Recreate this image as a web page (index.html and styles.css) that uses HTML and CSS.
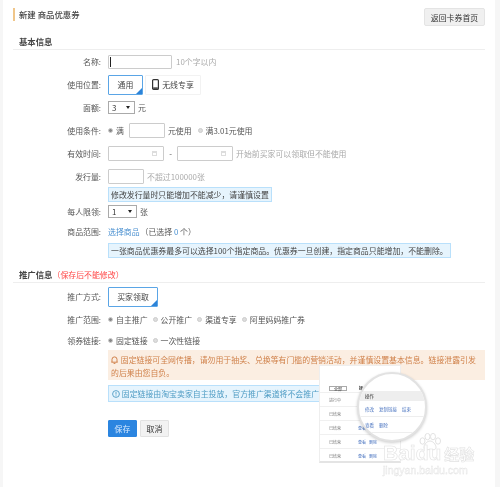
FILE: index.html
```html
<!DOCTYPE html>
<html lang="zh-CN">
<head>
    <meta charset="UTF-8">
    <title>新建商品优惠券</title>
    <link rel="stylesheet" href="styles.css">
</head>
<body>
<div class="page">
    <div class="title-bar">
        <h1 class="page-title">新建 商品优惠券</h1>
        <button class="back-btn">返回卡券首页</button>
    </div>

    <h2 class="section first">基本信息</h2>

    <div class="row">
        <label class="label">名称:</label>
        <span class="input name-input"><i class="caret"></i></span>
        <span class="muted">10个字以内</span>
    </div>
    <div class="row">
        <label class="label">使用位置:</label>
        <span class="tab active tab-common">通用</span>
        <span class="tab tab-wireless">
            <svg class="phone" width="7" height="11" viewBox="0 0 7 11"><rect x="0.6" y="0.6" width="5.8" height="9.8" rx="1" fill="none" stroke="#333" stroke-width="1.2"/><rect x="1.2" y="8.4" width="4.6" height="1.4" fill="#333"/></svg>
            无线专享
        </span>
    </div>
    <div class="row">
        <label class="label">面额:</label>
        <span class="select face-select">3<i class="arrow"></i></span>
        <span>元</span>
    </div>
    <div class="row">
        <label class="label">使用条件:</label>
        <span class="radio on"></span><span class="opt-man">满</span>
        <span class="input cond-input"></span>
        <span class="cond-unit">元使用</span>
        <span class="radio"></span><span>满3.01元使用</span>
    </div>
    <div class="row">
        <label class="label">有效时间:</label>
        <span class="input date"><i class="cal"></i></span>
        <span class="dash">-</span>
        <span class="input date"><i class="cal"></i></span>
        <span class="muted">开始前买家可以领取但不能使用</span>
    </div>
    <div class="row">
        <label class="label">发行量:</label>
        <span class="input count-input"></span>
        <span class="muted">不超过100000张</span>
    </div>
    <p class="hint hint-count">修改发行量时只能增加不能减少&#65292;请谨慎设置</p>
    <div class="row limit-row">
        <label class="label">每人限领:</label>
        <span class="select limit-select">1<i class="arrow"></i></span>
        <span>张</span>
    </div>
    <div class="row goods-row">
        <label class="label">商品范围:</label>
        <a class="link">选择商品</a>
        <span class="picked">&#65288;已选择 <b class="num">0</b> 个&#65289;</span>
    </div>
    <p class="hint hint-goods">一张商品优惠券最多可以选择100个指定商品。优惠券一旦创建&#65292;指定商品只能增加&#65292;不能删除。</p>

    <h2 class="section second">推广信息<span class="warn-note">&#65288;保存后不能修改&#65289;</span></h2>

    <div class="row">
        <label class="label">推广方式:</label>
        <span class="tab active tab-buyer">买家领取</span>
    </div>
    <div class="row">
        <label class="label">推广范围:</label>
        <span class="radio on"></span><span class="opt">自主推广</span>
        <span class="radio"></span><span class="opt">公开推广</span>
        <span class="radio"></span><span class="opt">渠道专享</span>
        <span class="radio"></span><span class="opt">阿里妈妈推广券</span>
    </div>
    <div class="row link-row">
        <label class="label">领券链接:</label>
        <span class="radio on"></span><span class="opt">固定链接</span>
        <span class="radio"></span><span class="opt">一次性链接</span>
    </div>

    <div class="notice">
        <svg class="bell" width="7" height="8" viewBox="0 0 7 8"><path d="M1 6V3.4a2.5 2.5 0 0 1 5 0V6M0.3 6.2h6.4M2.6 7.4h1.8" fill="none" stroke="#d0814a" stroke-width="1"/></svg>
        固定链接可全网传播&#65292;请勿用于抽奖、兑换等有门槛的营销活动&#65292;并谨慎设置基本信息。链接泄露引发的后果由您自负。
    </div>
    <div class="info">
        <svg class="info-icon" width="8" height="8" viewBox="0 0 8 8"><circle cx="4" cy="4" r="3.4" fill="none" stroke="#4f9cc4" stroke-width="0.9"/><path d="M4 2v2.6M4 5.4v0.8" stroke="#4f9cc4" stroke-width="0.9"/></svg>
        固定链接由淘宝卖家自主投放&#65292;官方推广渠道将不会推广
    </div>

    <div class="actions">
        <button class="btn primary">保存</button>
        <button class="btn">取消</button>
    </div>
</div>

<!-- callout picture pasted over the page -->
<div class="callout">
    <div class="callout-top"></div>
    <div class="callout-filter"><span class="mini-select">全部</span><b>操</b></div>
    <div class="callout-row"><span>进行中</span></div>
    <div class="callout-row"><span>已结束</span></div>
    <div class="callout-row"><span>已结束</span><a>查看</a></div>
    <div class="callout-row"><span>已结束</span><a>查看</a><a>删除</a></div>
    <div class="callout-row"><span>已结束</span><a>查看</a><a>删除</a></div>
</div>
<div class="lens">
    <div class="lens-head">操作</div>
    <div class="lens-row"><a>修改</a><a>复制链接</a><a>结束</a></div>
    <div class="lens-row"><a>查看</a><a>删除</a></div>
</div>

<div class="watermark">
    <svg class="paw" width="22" height="18" viewBox="0 0 22 18"><g fill="#fff" stroke="#e2e2e2" stroke-width="1"><ellipse cx="3.5" cy="8" rx="2.5" ry="3.2"/><ellipse cx="8.5" cy="3.6" rx="2.5" ry="3.2"/><ellipse cx="14" cy="3.6" rx="2.5" ry="3.2"/><ellipse cx="19" cy="8" rx="2.5" ry="3.2"/><path d="M11 8c-3 0-6 3.5-6 6.5 0 2.5 3 2.5 6 1.8 3 .7 6 .7 6-1.800C17 11.500 14 8 11 8z"/></g></svg>
    <div class="wm-logo">Baidu<span class="wm-cn">经验</span></div>
    <div class="wm-url">jingyan.baidu.com</div>
</div>
</body>
</html>
```
FILE: styles.css
```css
* {
    box-sizing: border-box;
}
html, body {
    margin: 0;
    padding: 0;
}
body {
    position: relative;
    height: 487px;
    overflow: hidden;
    background-color: #f6f6f6;
    font-family: "Noto Sans CJK SC", "Liberation Sans", sans-serif;
    font-size: 7.9px;
    color: #555;
    filter: blur(0.3px);
}
.page {
    margin: 0 5px 0 3px;
    height: 487px;
    padding: 8px 10px 0;
    background-color: #fff;
}

/* title */
.title-bar {
    display: flex;
    justify-content: space-between;
    align-items: flex-start;
    height: 27px;
}
.page-title {
    margin: 0;
    height: 13px;
    line-height: 13px;
    padding-left: 4px;
    border-left: 2px solid #f0c68a;
    font-size: 8.4px;
    font-weight: 500;
    color: #444;
}
.back-btn {
    width: 61px;
    height: 18px;
    padding: 0;
    border: 1px solid #e4e4e4;
    border-radius: 2px;
    background-color: #f0f0f0;
    font: inherit;
    color: #333;
}

/* sections */
.section {
    margin: 0;
    height: 15px;
    padding-left: 6px;
    border-bottom: 1px solid #eee;
    font-size: 8.4px;
    line-height: 12px;
    font-weight: 700;
    color: #444;
}
.section.second {
    margin-top: 10px;
    margin-bottom: 2px;
}
.warn-note {
    font-size: 7.9px;
    font-weight: 400;
    color: #f44;
}

/* form rows */
.row {
    display: flex;
    align-items: center;
    height: 23px;
    white-space: nowrap;
}
.label {
    flex: none;
    width: 95px;
    padding-right: 7px;
    text-align: right;
}
.limit-row {
    height: 18px;
}
.goods-row {
    height: 22px;
}
.link-row {
    height: 19px;
}
.muted {
    margin-left: 3px;
    color: #aaa;
}

.input {
    position: relative;
    display: inline-block;
    height: 15px;
    border: 1px solid #ccc;
    border-radius: 1px;
    background-color: #fff;
}
.name-input {
    width: 64px;
    height: 14px;
    margin-right: 1px;
}
.caret {
    display: block;
    width: 1px;
    height: 10px;
    margin: 1px 0 0 1px;
    background-color: #222;
}
.cond-input {
    width: 36px;
    margin: 0 3px 0 5px;
}
.date {
    width: 56px;
}
.cal {
    position: absolute;
    right: 6px;
    top: 4px;
    width: 5px;
    height: 5px;
    border: 1px solid #ddd;
    border-top-width: 2px;
}
.dash {
    width: 13px;
    text-align: center;
}
.count-input {
    width: 36px;
}

.tab {
    display: flex;
    align-items: center;
    justify-content: center;
    height: 20px;
    border-radius: 1px;
    color: #444;
}
.tab.active {
    position: relative;
    border: 1px solid #5aa5e6;
}
/* corner mark on the selected tab */
.tab.active::after {
    content: "";
    position: absolute;
    right: 0;
    bottom: 0;
    border: 3px solid transparent;
    border-right-color: #2d83d8;
    border-bottom-color: #2d83d8;
}
.tab-common {
    width: 35px;
}
.tab-buyer {
    width: 50px;
}
.tab-wireless {
    width: 56px;
    margin-left: 2px;
    border: 1px solid #f2f2f2;
    gap: 3px;
}

.select {
    position: relative;
    display: inline-block;
    height: 13px;
    line-height: 11px;
    padding-left: 3px;
    margin-right: 3px;
    border: 1px solid #aaa;
    color: #333;
}
.face-select {
    width: 27px;
}
.limit-select {
    width: 29px;
}
.arrow {
    position: absolute;
    right: 4px;
    top: 4px;
    border: 2px solid transparent;
    border-top: 3px solid #222;
}

.radio {
    flex: none;
    width: 5px;
    height: 5px;
    margin-right: 3px;
    border-radius: 50%;
    background-color: #ddd;
    border: 1px solid #ccc;
}
.radio.on {
    background-color: #888;
}
.cond-unit {
    margin-right: 6px;
}
.opt {
    margin-right: 5px;
}
.link {
    color: #4a90d0;
}
.picked {
    margin-left: 1px;
}
.num {
    font-weight: 400;
    color: #4a90d0;
}

/* blue hint strips */
.hint {
    margin: -1px 0 0 95px;
    width: max-content;
    height: 15px;
    line-height: 13px;
    padding: 0 2px;
    border: 1px solid #b9e0fb;
    background-color: #e6f4fd;
    color: #444;
}
.hint-goods {
    margin-top: 1px;
}

/* notices */
.notice {
    width: 377px;
    height: 30px;
    margin-left: 95px;
    padding: 3px 6px 3px 3px;
    line-height: 13px;
    background-color: #fbeee2;
    color: #d0814a;
}
.bell {
    margin: 0 1px 0 0;
    vertical-align: -1px;
}
.info {
    width: 225px;
    height: 17px;
    margin: 5px 0 0 95px;
    padding: 0 3px;
    line-height: 15px;
    white-space: nowrap;
    overflow: hidden;
    border: 1px solid #b9e0fb;
    background-color: #e6f4fd;
    color: #4f9cc4;
}
.info-icon {
    vertical-align: -1px;
}

.actions {
    display: flex;
    gap: 3px;
    margin: 18px 0 0 95px;
}
.btn {
    width: 29px;
    height: 17px;
    padding: 0;
    border: 1px solid #e2e2e2;
    border-radius: 1px;
    background-color: #f2f2f2;
    font: inherit;
    color: #333;
}
.btn.primary {
    border-color: #2b85e0;
    background-color: #2b85e0;
    color: #dcecff;
}

/* pasted callout */
.callout {
    position: absolute;
    left: 319px;
    top: 365px;
    width: 82px;
    height: 98px;
    border: 1px solid #eee;
    border-bottom: 2px solid #e4e4e4;
    background-color: #fff;
    font-size: 4px;
    color: #777;
}
.callout-top {
    height: 18px;
}
.callout-filter {
    display: flex;
    align-items: center;
    gap: 12px;
    height: 8px;
    padding-left: 9px;
    color: #333;
}
.mini-select {
    width: 18px;
    height: 5px;
    line-height: 4px;
    text-align: center;
    border: 1px solid #aaa;
}
.callout-row {
    display: flex;
    align-items: center;
    gap: 3px;
    height: 14px;
    padding-left: 9px;
    border-top: 1px solid #f0f0f0;
}
.callout-row span {
    width: 26px;
}
.callout-row a {
    color: #4a74c0;
}
.lens {
    position: absolute;
    left: 357px;
    top: 372px;
    width: 70px;
    height: 70px;
    padding-top: 17px;
    overflow: hidden;
    border: 2px solid #e2e2e2;
    border-radius: 50%;
    background-color: #fff;
    box-shadow: 0 1px 3px rgba(0, 0, 0, 0.2);
    font-size: 4.5px;
}
.lens-head {
    height: 10px;
    line-height: 10px;
    padding-left: 6px;
    background-color: #eee;
    color: #333;
}
.lens-row {
    display: flex;
    gap: 5px;
    height: 16px;
    padding: 5px 0 0 6px;
    border-bottom: 1px solid #eee;
    color: #4a74c0;
}

/* watermark */
.watermark {
    position: absolute;
    left: 383px;
    top: 433px;
    width: 95px;
    height: 46px;
    color: #fff;
}
.paw {
    position: absolute;
    left: 36px;
    top: 0;
}
.wm-logo {
    position: absolute;
    left: 0;
    top: 7px;
    font-family: "Liberation Sans", sans-serif;
    font-size: 21px;
    line-height: 26px;
    font-weight: 700;
    white-space: nowrap;
    -webkit-text-stroke: 0.6px #e2e2e2;
}
.wm-cn {
    margin-left: 3px;
    font-family: "Noto Sans CJK SC", sans-serif;
    font-size: 15px;
}
.wm-url {
    position: absolute;
    left: 0;
    top: 31px;
    font-family: "Liberation Sans", sans-serif;
    font-size: 10.5px;
    line-height: 12px;
    -webkit-text-stroke: 0.4px #e2e2e2;
}
```
